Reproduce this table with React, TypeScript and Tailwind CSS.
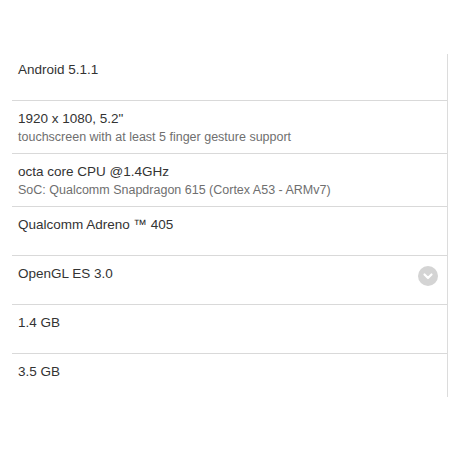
const rows = [
  { title: 'Android 5.1.1', h: 'h-[47px]', pt: 'pt-[6px]' },
  { title: '1920 x 1080, 5.2"', sub: 'touchscreen with at least 5 finger gesture support', h: 'h-[53px]', pt: 'pt-[8px]' },
  { title: 'octa core CPU @1.4GHz', sub: 'SoC: Qualcomm Snapdragon 615 (Cortex A53 - ARMv7)', h: 'h-[53px]', pt: 'pt-[8px]' },
  { title: 'Qualcomm Adreno ™ 405', h: 'h-[49px]', pt: 'pt-[8px]' },
  { title: 'OpenGL ES 3.0', h: 'h-[49px]', pt: 'pt-[8px]', more: true },
  { title: '1.4 GB', h: 'h-[49px]', pt: 'pt-[8px]' },
  { title: '3.5 GB', h: 'h-[43px]', pt: 'pt-[8px]', last: true },
];

function ChevronCircle() {
  return (
    <svg width="20" height="20" viewBox="0 0 20 20">
      <circle cx="10" cy="10" r="10" fill="#d4d4d4" />
      <path d="M6.5 8.5 L10 12 L13.5 8.5" fill="none" stroke="#fff" strokeWidth="2.2" strokeLinecap="round" strokeLinejoin="round" />
    </svg>
  );
}

export default function App() {
  return (
    <div className="w-[460px] h-[450px] bg-white pt-[54px] pl-[12px]" style={{ fontFamily: '"Liberation Sans", Arial, sans-serif' }}>
      <div className="w-[436px] border-r border-[#dcdcdc]">
        {rows.map((r, i) => (
          <div
            key={i}
            className={`relative pl-[6px] ${r.h} ${r.pt} ${r.last ? '' : 'border-b border-[#d9d9d9]'}`}
          >
            <div className="text-[13.5px] leading-[20px] text-[#333]">{r.title}</div>
            {r.sub && <div className="text-[12.5px] leading-[16px] text-[#6f6f6f]">{r.sub}</div>}
            {r.more && (
              <div className="absolute right-[9px] top-[10px]">
                <ChevronCircle />
              </div>
            )}
          </div>
        ))}
      </div>
    </div>
  );
}
